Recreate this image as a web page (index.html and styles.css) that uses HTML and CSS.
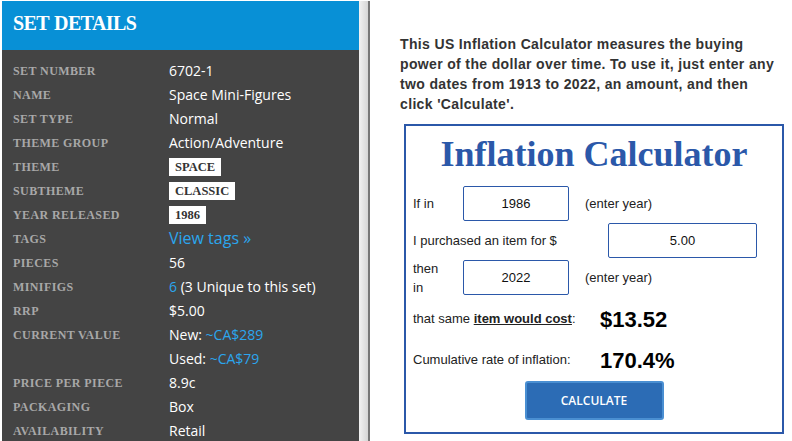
FILE: index.html
```html
<!DOCTYPE html>
<html lang="en">
<head>
    <meta charset="UTF-8">
    <meta name="viewport" content="width=device-width, initial-scale=1.0">
    <title>Set Details</title>
    <link rel="stylesheet" href="styles.css">
</head>
<body>
<section id="left_col">
    <section class="set-panel">
        <h2 class="set-title">SET DETAILS</h2>
        <dl class="set-list">
            <dt>Set number</dt><dd>6702-1</dd>
            <dt>Name</dt><dd>Space Mini-Figures</dd>
            <dt>Set type</dt><dd>Normal</dd>
            <dt>Theme group</dt><dd>Action/Adventure</dd>
            <dt>Theme</dt><dd><span class="tag">SPACE</span></dd>
            <dt>Subtheme</dt><dd><span class="tag">CLASSIC</span></dd>
            <dt>Year released</dt><dd><span class="tag">1986</span></dd>
            <dt>Tags</dt><dd><a class="link big" href="#">View tags &raquo;</a></dd>
            <dt>Pieces</dt><dd>56</dd>
            <dt>Minifigs</dt><dd><a class="link" href="#">6</a> (3 Unique to this set)</dd>
            <dt>RRP</dt><dd>$5.00</dd>
            <dt>Current value</dt><dd>New: <a class="link" href="#">~CA$289</a><br>Used: <a class="link" href="#">~CA$79</a></dd>
            <dt>Price per piece</dt><dd>8.9c</dd>
            <dt>Packaging</dt><dd>Box</dd>
            <dt>Availability</dt><dd>Retail</dd>
        </dl>
    </section>
    <div class="scroll_strip"></div>
    <div class="scroll_line"></div>
</section>

<section id="right_col">
    <p class="intro">This US Inflation Calculator measures the buying power of the dollar over time. To use it, just enter any two dates from 1913 to 2022, an amount, and then click 'Calculate'.</p>

    <form class="calc" id="calcForm">
        <h1 class="calc-title">Inflation Calculator</h1>

        <div class="calc-row">
            <label class="short" for="year1">If in</label>
            <input class="field year" type="text" id="year1" value="1986">
            <span class="hint">(enter year)</span>
        </div>

        <div class="calc-row">
            <label for="amount">I purchased an item for $</label>
            <input class="field amount" type="text" id="amount" value="5.00">
        </div>

        <div class="calc-row">
            <label class="short" for="year2">then in</label>
            <input class="field year" type="text" id="year2" value="2022">
            <span class="hint">(enter year)</span>
        </div>

        <div class="calc-row result first">
            <span class="res-label">that same <u class="strong">item would cost</u>:</span>
            <span class="res-value">$13.52</span>
        </div>

        <div class="calc-row result">
            <span class="res-label">Cumulative rate of inflation:</span>
            <span class="res-value">170.4%</span>
        </div>

        <div class="btn-wrap">
            <button type="submit">CALCULATE</button>
        </div>
    </form>
</section>
</body>
</html>
```

FILE: styles.css
```css
body{
    margin: 0;
    display: flex;
    height: 100vh;
    overflow: hidden;
    background: #fff;
}
#left_col{
    display: flex;
    padding: 1px 0 0 2px;
    width: 368px;
    flex-shrink: 0;
}
.set-panel{
    width: 357px;
    background: #444;
}
.scroll_strip{
    width: 9px;
    background: linear-gradient(to right, #f2f2f2, #d6d6d6);
}
.scroll_line{
    width: 2px;
    background: #777;
}
.set-title{
    margin: 0;
    height: 49px;
    background: #0890d6;
    color: #fff;
    font-family: "Liberation Serif", serif;
    font-weight: bold;
    font-size: 20px;
    letter-spacing: -0.6px;
    word-spacing: 1px;
    line-height: 45px;
    padding-left: 11px;
}
.set-list{
    display: grid;
    grid-template-columns: 156px 1fr;
    grid-auto-rows: minmax(24px, auto);
    margin: 0;
    padding: 9px 0 0 11px;
    line-height: 24px;
}
.set-list dt{
    text-transform: uppercase;
    font-family: "Liberation Serif", serif;
    font-weight: bold;
    font-size: 12px;
    letter-spacing: 0.4px;
    color: #a8a8a8;
}
.set-list dd{
    margin: 0;
    font-family: "Open Sans", sans-serif;
    font-size: 14px;
    color: #fff;
}
.tag{
    background: #fff;
    color: #333;
    font-family: "Liberation Serif", serif;
    font-weight: bold;
    font-size: 12.5px;
    line-height: 12px;
    padding: 2px 6px;
    vertical-align: 1px;
}
.link{
    color: #2ba6ee;
    text-decoration: none;
}
.link.big{
    font-size: 16px;
    line-height: 16px;
}

#right_col{
    padding-left: 30px;
}
.intro{
    margin: 34px 0 0 0;
    width: 378px;
    font-family: "Liberation Sans", Arial, sans-serif;
    font-weight: bold;
    font-size: 14px;
    letter-spacing: 0.35px;
    line-height: 20px;
    color: #333;
}
.calc{
    margin: 10px 0 0 4px;
    height: 306px;
    border: 2px solid #2b58a9;
    padding: 0 0 0 7px;
    width: 369px;
    font-family: "Liberation Sans", Arial, sans-serif;
    font-size: 13px;
    color: #222;
}
.calc-title{
    margin: 0;
    padding-top: 8px;
    height: 51px;
    text-align: center;
    font-family: "Liberation Serif", "Times New Roman", serif;
    font-size: 36px;
    line-height: 40px;
    color: #2b58a9;
    padding-right: 7px;
}
.calc-row{
    display: flex;
    align-items: center;
    height: 37px;
}
.calc-row label{
    width: 195px;
    line-height: 19px;
}
.calc-row label.short{
    width: 30px;
    margin-right: 20px;
}
.field{
    height: 35px;
    box-sizing: border-box;
    border: 1px solid #2b58a9;
    border-radius: 2px;
    text-align: center;
    font-family: "Liberation Sans", Arial, sans-serif;
    font-size: 13px;
    color: #111;
    padding: 0;
}
.field.year{
    width: 106px;
}
.field.amount{
    width: 149px;
}
.hint{
    margin-left: 16px;
}
.calc-row.result{
    height: 41px;
}
.calc-row.result.first{
    margin-top: 2px;
}
.res-label{
    width: 187px;
}
.res-value{
    font-weight: bold;
    font-size: 22px;
    color: #000;
    margin-top: 3px;
}
.strong{
    font-weight: bold;
}
.btn-wrap{
    display: flex;
    justify-content: center;
    padding-right: 7px;
    margin-top: 1px;
}
button{
    width: 139px;
    height: 39px;
    background: #2c6cb5;
    border: 2px solid #4a8fd2;
    border-radius: 3px;
    color: #fff;
    font-family: "Open Sans", sans-serif;
    font-weight: 600;
    font-size: 12px;
    cursor: pointer;
}
button:hover{
    background: #2660a3;
}
```
